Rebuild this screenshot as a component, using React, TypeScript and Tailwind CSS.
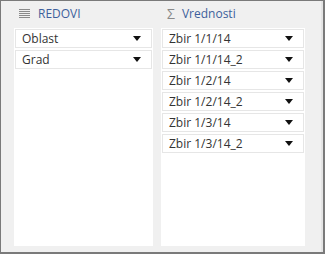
import React from "react";

const rows = ["Oblast", "Grad"];
const values = ["Zbir 1/1/14", "Zbir 1/1/14_2", "Zbir 1/2/14", "Zbir 1/2/14_2", "Zbir 1/3/14", "Zbir 1/3/14_2"];

function Caret() {
  return (
    <svg width="8" height="5" viewBox="0 0 8 5" className="shrink-0">
      <path d="M0 0H8L4 5Z" fill="#111" />
    </svg>
  );
}

function Field({ label }: { label: string }) {
  return (
    <div className="flex h-[19px] items-center justify-between border border-[#e6e6e6] bg-white pl-[6px] pr-[10px] text-[12px] text-[#333]">
      <span>{label}</span>
      <Caret />
    </div>
  );
}

function RowsIcon() {
  return (
    <svg width="11" height="9" viewBox="0 0 11 9">
      {[0, 2, 4, 6, 8].map((y) => (
        <rect key={y} x="0" y={y} width="11" height="1" fill="#8a8a8a" />
      ))}
    </svg>
  );
}

export default function App() {
  return (
    <div
      className="flex h-[254px] w-[325px] border-t border-l border-r-2 border-b-2 border-[#7a7a7a] bg-[#f0f0f0]"
      style={{ fontFamily: '"Open Sans", "Noto Sans", sans-serif' }}
    >
      <div className="flex flex-1 gap-[8px] pl-[13px] pb-[6px]">
        <div className="flex w-[139px] flex-col">
          <div className="flex h-[27px] items-center gap-[8px] pl-[5px] pb-[2px] text-[12px] text-[#3d5f9c]">
            <RowsIcon />
            <span>REDOVI</span>
          </div>
          <div className="flex flex-1 flex-col gap-[2px] bg-white p-[1px]">
            {rows.map((r) => (
              <Field key={r} label={r} />
            ))}
          </div>
        </div>
        <div className="flex w-[144px] flex-col">
          <div className="flex h-[27px] items-center gap-[7px] pl-[6px] pb-[2px] text-[12px] text-[#3d5f9c]">
            <span className="text-[14px] leading-none text-[#8a8a8a]">Σ</span>
            <span>Vrednosti</span>
          </div>
          <div className="flex flex-1 flex-col gap-[2px] bg-white p-[1px]">
            {values.map((v) => (
              <Field key={v} label={v} />
            ))}
          </div>
        </div>
      </div>
      <div className="w-[2px] bg-[#e4e4e4]" />
    </div>
  );
}
